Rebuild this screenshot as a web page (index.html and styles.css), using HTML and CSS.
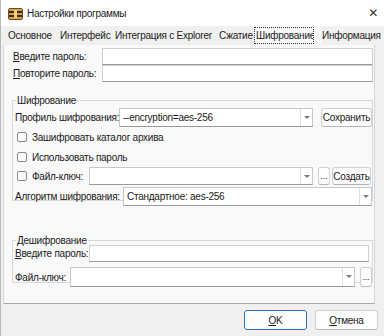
FILE: index.html
```html
<!DOCTYPE html>
<html lang="ru">
<head>
    <meta charset="UTF-8">
    <title>Настройки программы</title>
    <link rel="stylesheet" href="styles.css">
</head>
<body>
<div class="window">
    <!--title bar-->
    <div class="titlebar">
        <svg class="app-icon" width="15" height="12" viewBox="0 0 15 12">
            <rect x="0.5" y="0.5" width="14" height="11" rx="1.5" fill="#d8a24a" stroke="#6b4a1e"/>
            <rect x="1" y="3" width="13" height="2" fill="#3a2a14"/>
            <rect x="1" y="7" width="13" height="2" fill="#3a2a14"/>
            <rect x="6" y="2" width="3" height="8" fill="#f2d27a"/>
        </svg>
        <span class="title">Настройки программы</span>
        <span class="close">&#x2715;</span>
    </div>

    <div class="tabs">
        <div class="tab t1">Основное</div>
        <div class="tab t2">Интерфейс</div>
        <div class="tab t3">Интеграция с Explorer</div>
        <div class="tab t4">Сжатие</div>
        <div class="tab t5 active"><span>Шифрование</span></div>
        <div class="tab t6">Информация</div>
    </div>

    <div class="panel">
        <div class="row pw-row">
            <label class="lbl pw-lbl"><u>В</u>ведите пароль:</label>
            <div class="input pw-input"></div>
        </div>
        <div class="row pw-row">
            <label class="lbl pw-lbl"><u>П</u>овторите пароль:</label>
            <div class="input pw-input"></div>
        </div>

        <fieldset class="group enc">
            <legend>Шифрование</legend>
            <div class="row r-profile">
                <label class="lbl profile-lbl">Профиль шифрования:</label>
                <div class="combo profile-combo"><span class="val">--encryption=aes-256</span><span class="arrow"></span></div>
                <button class="btn save">Сохранить</button>
            </div>
            <div class="row check-row">
                <span class="check"></span><span class="lbl">Зашифровать каталог архива</span>
            </div>
            <div class="row check-row">
                <span class="check"></span><span class="lbl">Использовать пароль</span>
            </div>
            <div class="row r-key">
                <span class="check"></span><span class="lbl key-lbl">Файл-ключ:</span>
                <div class="combo key-combo"><span class="val"></span><span class="arrow"></span></div>
                <button class="btn dots">...</button>
                <button class="btn create">Создать</button>
            </div>
            <div class="row r-algo">
                <label class="lbl algo-lbl">Алгоритм шифрования:</label>
                <div class="combo algo-combo"><span class="val">Стандартное: aes-256</span><span class="arrow"></span></div>
            </div>
        </fieldset>

        <fieldset class="group dec">
            <legend>Дешифрование</legend>
            <div class="row r-dpw">
                <label class="lbl dpw-lbl"><u>В</u>ведите пароль:</label>
                <div class="input dpw-input"></div>
            </div>
            <div class="row r-dkey">
                <label class="lbl dkey-lbl">Файл-ключ:</label>
                <div class="combo dkey-combo"><span class="val"></span><span class="arrow"></span></div>
                <button class="btn dots">...</button>
            </div>
        </fieldset>
    </div>

    <div class="footer">
        <button class="btn dlg ok"><u>O</u>K</button>
        <button class="btn dlg"><u>О</u>тмена</button>
    </div>
</div>
</body>
</html>
```

FILE: styles.css
```css
*{
    box-sizing: border-box;
    margin: 0;
    padding: 0;
}
body{
    font-family: "Liberation Sans", "DejaVu Sans", sans-serif;
    font-size: 10px;
    letter-spacing: -0.25px;
    color: #1a1a1a;
    background: #f0f0f0;
    width: 384px;
    height: 336px;
    overflow: hidden;
}
.window{
    width: 384px;
    height: 336px;
    border-left: 1px solid #b9b9b9;
    background: #f0f0f0;
}
/*title bar*/
.titlebar{
    height: 26px;
    background: #fff;
    display: flex;
    align-items: center;
    padding-left: 7px;
}
.app-icon{
    margin-top: 1px;
}
.title{
    margin-left: 4px;
    color: #222;
}
.close{
    margin-left: auto;
    margin-right: 6px;
    font-size: 12px;
    color: #333;
}
/*tabs*/
.tabs{
    height: 19px;
    display: flex;
    align-items: center;
    padding-left: 7px;
}
.tab{
    overflow: hidden;
    white-space: nowrap;
    height: 19px;
    line-height: 19px;
    color: #222;
}
.t1{ width: 52px; padding-right: 4px; }
.t2{ width: 55px; padding-right: 7px; }
.t3{ width: 104px; padding-right: 10px; }
.t4{ width: 35px; padding-right: 9px; }
.t5{ width: 68px; }
.t6{ width: 62px; }
.tab.active{
    background: #f9f9f9;
}
.tab.active span{
    display: block;
    width: 60px;
    height: 17px;
    line-height: 15px;
    border: 1px dotted #333;
    overflow: hidden;
    padding-left: 1px;
    margin-top: 1px;
}
/*panel*/
.panel{
    margin-left: 2px;
    width: 372px;
    height: 259px;
    background: #f9f9f9;
    border: 1px solid #d6d6d6;
    border-top: none;
    border-bottom: 1px solid #a8a8a8;
    padding: 3px 0 0 9px;
}
.row{
    display: flex;
    align-items: center;
}
.lbl{
    white-space: nowrap;
}
.pw-lbl{
    width: 89px;
}
.pw-row{
    height: 17px;
}
.input{
    background: #fff;
    border: 1px solid #d0d0d0;
    border-bottom: 1px solid #9a9a9a;
    height: 17px;
}
.pw-input{
    width: 271px;
}
.group{
    border: 1px solid #d8d8d8;
    margin-left: -1px;
    width: 361px;
    padding: 0 0 0 2px;
}
.group legend{
    padding: 0 1px;
    margin-left: 1px;
    line-height: 13px;
}
.enc{
    margin-top: 12px;
    height: 107px;
}
.combo{
    display: flex;
    background: #fff;
    border: 1px solid #c8c8c8;
    border-bottom: 1px solid #9a9a9a;
    height: 19px;
}
.combo .val{
    flex: 1;
    padding-left: 3px;
    line-height: 17px;
    white-space: nowrap;
    overflow: hidden;
}
.combo .arrow{
    width: 12px;
    border-left: 1px solid #e0e0e0;
    position: relative;
}
.combo .arrow::after{
    content: "";
    position: absolute;
    left: 3px;
    top: 7px;
    border-left: 3px solid transparent;
    border-right: 3px solid transparent;
    border-top: 3px solid #7a7a7a;
}
.btn{
    font-family: inherit;
    font-size: 10px;
    letter-spacing: -0.25px;
    background: #fdfdfd;
    border: 1px solid #d0d0d0;
    border-bottom-color: #b5b5b5;
    border-radius: 3px;
    color: #1a1a1a;
    height: 19px;
    padding: 0;
}
.r-profile{
    margin-top: 1px;
}
.profile-lbl{
    width: 104px;
}
.profile-combo{
    width: 194px;
}
.save{
    width: 51px;
    margin-left: 8px;
}
.check-row{
    height: 20px;
    padding-left: 2px;
}
.check{
    display: inline-block;
    width: 10px;
    height: 10px;
    border: 1px solid #8a8a8a;
    border-radius: 2px;
    background: #fbfbfb;
    margin-right: 5px;
}
.r-key{
    padding-left: 2px;
}
.key-lbl{
    width: 57px;
}
.key-combo{
    width: 224px;
    height: 18px;
}
.dots{
    width: 12px;
    margin-left: 5px;
    height: 18px;
    font-size: 9px;
    line-height: 9px;
}
.create{
    width: 39px;
    margin-left: 2px;
    height: 18px;
}
.r-algo{
    margin-top: 2px;
}
.algo-lbl{
    width: 108px;
}
.algo-combo{
    width: 249px;
}
.dec{
    margin-top: 33px;
    height: 49px;
}
.dpw-lbl{
    width: 74px;
}
.r-dpw{
    margin-top: -2px;
}
.dpw-input{
    width: 280px;
}
.r-dkey{
    margin-top: 5px;
}
.dkey-lbl{
    width: 55px;
}
.dkey-combo{
    width: 285px;
    height: 20px;
}
.r-dkey .dots{
    height: 20px;
}
/*dialog buttons*/
.footer{
    display: flex;
    justify-content: flex-end;
    gap: 8px;
    padding: 6px 6px 0 0;
}
.dlg{
    width: 63px;
    height: 20px;
    background: #fdfdfd;
}
.dlg.ok{
    border: 1px solid #2c6fb8;
}
```
